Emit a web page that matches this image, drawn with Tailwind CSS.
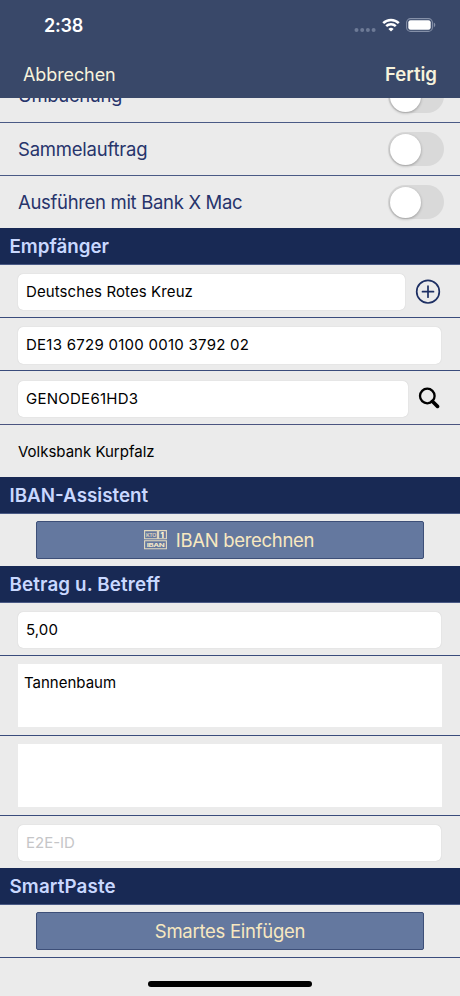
<!DOCTYPE html>
<html lang="de">
<head>
    <meta charset="UTF-8">
    <meta name="viewport" content="width=device-width, initial-scale=1.0">
    <title>Überweisung</title>
    <script src="https://cdn.jsdelivr.net/npm/@tailwindcss/browser@4"></script>
</head>
<body class="relative flex flex-col w-[460px] h-[996px] overflow-hidden bg-[#ebebeb] font-['Inter',sans-serif] text-black">
    <!-- Status bar and navigation -->
    <header class="shrink-0 h-[98px] bg-[#394869]">
        <div class="flex items-center justify-between h-[50px] pl-11 pr-6">
            <span class="pt-0.5 text-lg font-semibold tracking-[-0.25px] text-white">2:38</span>
            <div class="flex items-center">
                <svg class="w-[22px] h-2 mt-2.5" viewBox="0 0 22 8" fill="#6d7a96">
                    <circle cx="2.5" cy="4" r="2"/><circle cx="8.2" cy="4" r="2"/><circle cx="13.9" cy="4" r="2"/><circle cx="19.6" cy="4" r="2"/>
                </svg>
                <svg class="w-[18px] h-[14px] ml-[6px]" viewBox="0 0 18 14" fill="none" stroke="#fff" stroke-width="2.5">
                    <path d="M1.2 5.1a11.1 11.1 0 0 1 15.6 0"/>
                    <path d="M4.2 8.2a6.8 6.8 0 0 1 9.6 0"/>
                    <path d="M9 13.6 6.4 10.9a3.8 3.8 0 0 1 5.2 0z" fill="#fff" stroke="none"/>
                </svg>
                <svg class="w-[30px] h-[14px] ml-[6px]" viewBox="0 0 30 14">
                    <rect x=".6" y=".6" width="25.8" height="12.8" rx="4" fill="none" stroke="#8590a8" stroke-width="1.1"/>
                    <rect x="2.3" y="2.3" width="22.4" height="9.4" rx="2.2" fill="#fff"/>
                    <path d="M27.8 4.6c2 .9 2 3.9 0 4.8z" fill="#8590a8"/>
                </svg>
            </div>
        </div>
        <div class="flex items-center justify-between h-12 pl-[23px] pr-[23px] text-[18px] text-[#f7f3dc]">
            <button class="tracking-[-0.1px]">Abbrechen</button>
            <button class="pt-0.5 font-semibold text-[18.6px]">Fertig</button>
        </div>
    </header>

    <main class="flex-1 min-h-0 overflow-hidden">
        <!-- Options; the first row is scrolled partly under the header -->
        <section class="-mt-[28px] text-[18.5px] tracking-[-0.32px] text-[#27346b] [clip-path:inset(28px_0_0_0)]">
            <div class="flex items-center justify-between h-[53px] pl-[18px] pr-4 border-b border-[#4a5a85]">
                <span>Umbuchung</span>
                <span class="flex items-center w-14 h-[34px] pl-[2px] rounded-full bg-[#d9d9d9]"><span class="size-[31px] rounded-full bg-white shadow-[0_1px_3px_rgba(0,0,0,0.3)]"></span></span>
            </div>
            <div class="flex items-center justify-between h-[53px] pl-[18px] pr-4 border-b border-[#4a5a85]">
                <span class="pt-0.5 tracking-[-0.22px]">Sammelauftrag</span>
                <span class="flex items-center w-14 h-[34px] pl-[2px] rounded-full bg-[#d9d9d9]"><span class="size-[31px] rounded-full bg-white shadow-[0_1px_3px_rgba(0,0,0,0.3)]"></span></span>
            </div>
            <div class="flex items-center justify-between h-[52px] pl-[18px] pr-4">
                <span class="pt-0.5">Ausführen mit Bank X Mac</span>
                <span class="flex items-center w-14 h-[34px] pl-[2px] rounded-full bg-[#d9d9d9]"><span class="size-[31px] rounded-full bg-white shadow-[0_1px_3px_rgba(0,0,0,0.3)]"></span></span>
            </div>
        </section>

        <!-- Recipient -->
        <h2 class="flex items-center h-[37px] pt-0.5 pl-[9.5px] bg-[#182954] text-[18.8px] font-semibold text-[#c9d8ff] border-b border-[#4a5a85]">Empfänger</h2>
        <section class="text-[15px]">
            <div class="flex items-start h-[53px] pt-[9px] pl-[18px] border-b border-[#3a4c7c]">
                <div class="flex items-center w-[387px] h-9 px-2 bg-white rounded-[5px] shadow-[0_0_1px_#bbb] tracking-[0.1px]">Deutsches Rotes Kreuz</div>
                <svg class="w-[26px] h-[26px] ml-[10px] mt-[5px]" viewBox="0 0 26 26" fill="none" stroke="#1d2f63" stroke-width="1.7">
                    <circle cx="13" cy="12.7" r="11.3"/>
                    <path d="M7.5 12.7h11M13 7.2v11" stroke-linecap="round"/>
                </svg>
            </div>
            <div class="flex items-start h-[53px] pt-[9px] pl-[18px] border-b border-[#3a4c7c]">
                <div class="flex items-center w-[423px] h-[37px] px-2 bg-white rounded-[5px] shadow-[0_0_1px_#bbb] tracking-[0.26px]">DE13 6729 0100 0010 3792 02</div>
            </div>
            <div class="flex items-start h-[54px] pt-[10px] pl-[18px] border-b border-[#4b5580]">
                <div class="flex items-center w-[390px] h-9 px-2 bg-white rounded-[5px] shadow-[0_0_1px_#bbb] tracking-[0.26px]">GENODE61HD3</div>
                <svg class="w-[22px] h-[22px] ml-[10px] mt-[6px]" viewBox="0 0 22 22" fill="none" stroke="#000">
                    <circle cx="9.3" cy="9" r="7.3" stroke-width="2.3"/>
                    <path d="M14.3 14.3 19.5 19.4" stroke-width="3.6" stroke-linecap="round"/>
                </svg>
            </div>
            <div class="flex items-center h-[52px] pt-0.5 pl-[18px]">Volksbank Kurpfalz</div>
        </section>

        <!-- IBAN assistant -->
        <h2 class="flex items-center h-[37px] pt-0.5 pl-[9.5px] bg-[#182954] text-[18.8px] font-semibold text-[#c9d8ff] border-b border-[#4a5a85]">IBAN-Assistent</h2>
        <div class="h-[52px] pt-[7px] px-9">
            <button class="flex items-center justify-center w-full h-[38px] pr-[2px] bg-[#64789f] border border-[#3d4f78] rounded-[2px] text-[18.5px] tracking-[-0.3px] text-[#f8e8c0]">
                <svg class="w-[23px] h-[20px] mr-[9px]" viewBox="0 0 23 20" fill="none" stroke="#e5dcc0">
                    <path d="M.6 .6h12.8v8.2H.6zM14.6 .6h7.8v8.2h-7.8zM.6 10.8h21.8v8H.6z" stroke-width="1.1"/>
                    <text x="2" y="6.5" font-size="4.8" font-weight="600" textLength="10" lengthAdjust="spacingAndGlyphs" fill="#e5dcc0" stroke="none">KTO</text>
                    <text x="16.4" y="7.6" font-size="7.8" font-weight="800" fill="#fff5d5" stroke="none">1</text>
                    <text x="2.7" y="16.9" font-size="5.4" font-weight="700" textLength="17.6" lengthAdjust="spacingAndGlyphs" fill="#f0e6c8" stroke="none">IBAN</text>
                </svg>
                <span class="pt-0.5">IBAN berechnen</span>
            </button>
        </div>

        <!-- Amount and subject -->
        <h2 class="flex items-center h-[37px] pt-0.5 pl-[9.5px] bg-[#182954] text-[18.8px] font-semibold tracking-[0.13px] text-[#c9d8ff] border-b border-[#4a5a85]">Betrag u. Betreff</h2>
        <section class="text-[15px]">
            <div class="h-[53px] pt-[9px] pl-[18px] border-b border-[#3a4c7c]">
                <div class="flex items-center w-[423px] h-9 px-2 bg-white rounded-[5px] shadow-[0_0_1px_#bbb] tracking-[0.1px]">5,00</div>
            </div>
            <div class="h-20 pt-2 pl-[18px] border-b border-[#3a4c7c]">
                <div class="w-[424px] h-[63px] px-1.5 pt-2 bg-white">Tannenbaum</div>
            </div>
            <div class="h-20 pt-2 pl-[18px] border-b border-[#3a4c7c]">
                <div class="w-[424px] h-[63px] bg-white"></div>
            </div>
            <div class="h-[52px] pt-[9px] pl-[18px]">
                <div class="flex items-center w-[423px] h-9 px-2 bg-white rounded-[5px] shadow-[0_0_1px_#bbb] text-[#c5c5c7]">E2E-ID</div>
            </div>
        </section>

        <!-- SmartPaste -->
        <h2 class="flex items-center h-[37px] pt-0.5 pl-[9.5px] bg-[#182954] text-[18.8px] font-semibold tracking-[0.13px] text-[#c9d8ff] border-b border-[#4a5a85]">SmartPaste</h2>
        <div class="h-[53px] pt-[7px] px-9 border-b border-[#3a4c7c]">
            <button class="flex items-center justify-center w-full h-[38px] pt-0.5 bg-[#64789f] border border-[#3d4f78] rounded-[2px] text-[18.5px] tracking-[-0.27px] text-[#f8e8c0]">Smartes Einfügen</button>
        </div>
    </main>

    <!-- Home indicator -->
    <div class="absolute bottom-[9px] left-[148px] w-[164px] h-[6px] rounded-full bg-black"></div>
</body>
</html>
